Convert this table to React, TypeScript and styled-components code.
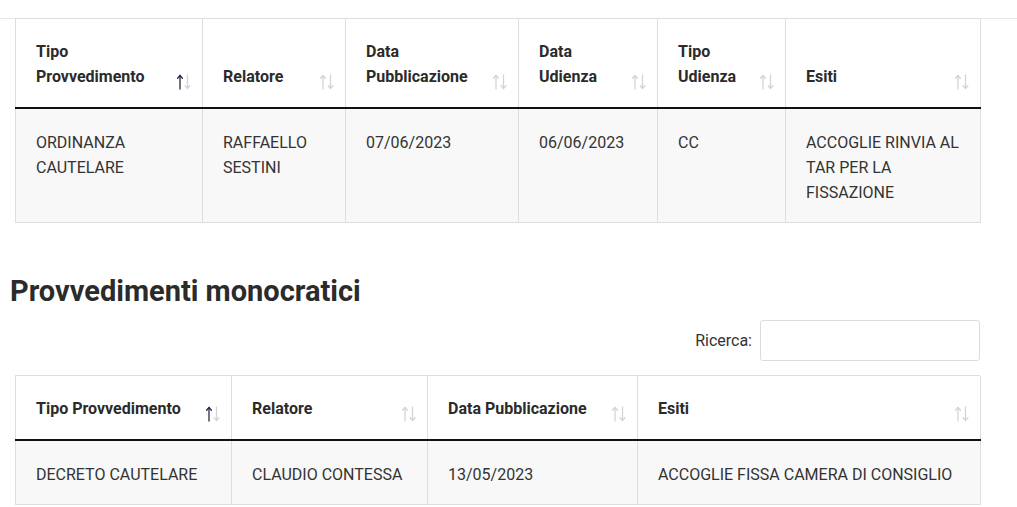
import styled, { createGlobalStyle } from 'styled-components';

const GlobalStyle = createGlobalStyle`
  body {
    margin: 0;
    background: #fff;
    font-family: Roboto, "Liberation Sans", sans-serif;
    color: #333;
  }
`;

const TopRule = styled.div`
  height: 18px;
  border-bottom: 1px solid #e6e6e6;
`;

const Page = styled.div`
  padding: 0 37px 0 15px;
`;

const Table = styled.table`
  width: 965px;
  border-collapse: collapse;
  table-layout: fixed;
  border: 1px solid #dedede;
  border-top: none;
  font-size: 16px;
  line-height: 25px;
`;

const Th = styled.th`
  text-align: left;
  vertical-align: bottom;
  font-weight: 700;
  color: #2b2b2b;
  padding: 20px 10px 18px 20px;
  border-left: 1px solid #dedede;
  border-bottom: 2px solid #111;
  background: #fff;
`;

const HeadInner = styled.div`
  display: flex;
  align-items: flex-end;
  justify-content: space-between;
  gap: 6px;
`;

const Td = styled.td`
  vertical-align: top;
  padding: 21px 20px 17px;
  border-left: 1px solid #dedede;
  background: #f8f8f8;
  color: #333;
`;

const Heading = styled.h2`
  margin: 50px 0 0 -5px;
  font-size: 29px;
  line-height: 36px;
  font-weight: 700;
  color: #2b2b2b;
`;

const SearchRow = styled.div`
  display: flex;
  justify-content: flex-end;
  align-items: center;
  gap: 8px;
  margin: 11px 0 14px;
  width: 965px;
`;

const SearchLabel = styled.label`
  font-size: 16px;
  color: #333;
`;

const SearchInput = styled.input`
  width: 218px;
  height: 39px;
  box-sizing: content-box;
  padding: 0;
  border: 1px solid #dcdcdc;
  border-radius: 3px;
  font: inherit;
`;

const TableFrame = styled.div<{ $pull?: boolean }>`
  border-top: 1px solid #dedede;
  width: 965px;
  margin-top: ${(p) => (p.$pull ? '-1px' : '0')};
`;

const SortIcon = ({ active }: { active?: boolean }) => (
  <svg width="16" height="16" viewBox="0 0 16 16" style={{ flexShrink: 0, marginBottom: -1 }}>
    <g fill="none" strokeWidth="1.3" strokeLinecap="round" strokeLinejoin="round">
      <g stroke={active ? '#252a48' : '#d4d4d4'}>
        <path d="M4 15V1.5" />
        <path d="M1.6 4.2L4 1.5l2.4 2.7" />
      </g>
      <g stroke="#d4d4d4">
        <path d="M11.5 1v13.5" />
        <path d="M9.1 11.8l2.4 2.7 2.4-2.7" />
      </g>
    </g>
  </svg>
);

type Col = { label: string; width: number };

const DataTable = ({ cols, rows }: { cols: Col[]; rows: string[][] }) => (
  <Table>
    <colgroup>
      {cols.map((c) => (
        <col key={c.label} style={{ width: c.width }} />
      ))}
    </colgroup>
    <thead>
      <tr>
        {cols.map((c, i) => (
          <Th key={c.label}>
            <HeadInner>
              <span>{c.label}</span>
              <SortIcon active={i === 0} />
            </HeadInner>
          </Th>
        ))}
      </tr>
    </thead>
    <tbody>
      {rows.map((r, ri) => (
        <tr key={ri}>
          {r.map((cell, ci) => (
            <Td key={ci}>{cell}</Td>
          ))}
        </tr>
      ))}
    </tbody>
  </Table>
);

const collegiali: Col[] = [
  { label: 'Tipo Provvedimento', width: 187 },
  { label: 'Relatore', width: 143 },
  { label: 'Data Pubblicazione', width: 173 },
  { label: 'Data Udienza', width: 139 },
  { label: 'Tipo Udienza', width: 128 },
  { label: 'Esiti', width: 195 },
];

const monocratici: Col[] = [
  { label: 'Tipo Provvedimento', width: 216 },
  { label: 'Relatore', width: 196 },
  { label: 'Data Pubblicazione', width: 210 },
  { label: 'Esiti', width: 343 },
];

export default function App() {
  return (
    <>
      <GlobalStyle />
      <TopRule />
      <Page>
        <TableFrame $pull>
          <DataTable
            cols={collegiali}
            rows={[
              [
                'ORDINANZA CAUTELARE',
                'RAFFAELLO SESTINI',
                '07/06/2023',
                '06/06/2023',
                'CC',
                'ACCOGLIE RINVIA AL TAR PER LA FISSAZIONE',
              ],
            ]}
          />
        </TableFrame>
        <Heading>Provvedimenti monocratici</Heading>
        <SearchRow>
          <SearchLabel htmlFor="ricerca">Ricerca:</SearchLabel>
          <SearchInput id="ricerca" type="search" />
        </SearchRow>
        <TableFrame>
          <DataTable
            cols={monocratici}
            rows={[['DECRETO CAUTELARE', 'CLAUDIO CONTESSA', '13/05/2023', 'ACCOGLIE FISSA CAMERA DI CONSIGLIO']]}
          />
        </TableFrame>
      </Page>
    </>
  );
}
